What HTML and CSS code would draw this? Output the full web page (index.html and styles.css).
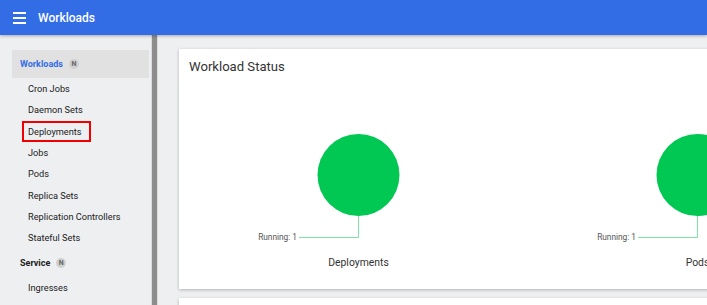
FILE: index.html
```html
<!DOCTYPE html>
<html lang="en">
<head>
    <meta charset="UTF-8">
    <meta name="viewport" content="width=device-width, initial-scale=1.0">
    <title>Workloads</title>
    <link rel="stylesheet" href="styles.css">
</head>
<body>
    <div class="topbar">
        <div class="burger"><span></span><span></span><span></span></div>
        <div class="title">Workloads</div>
    </div>
    <div class="layout">
        <div class="sidebar">
            <div class="section active">Workloads <span class="badge">N</span></div>
            <div class="item">Cron Jobs</div>
            <div class="item">Daemon Sets</div>
            <div class="item"><span class="marked">Deployments</span></div>
            <div class="item">Jobs</div>
            <div class="item">Pods</div>
            <div class="item">Replica Sets</div>
            <div class="item">Replication Controllers</div>
            <div class="item">Stateful Sets</div>
            <div class="section">Service <span class="badge">N</span></div>
            <div class="item">Ingresses</div>
            <div class="item">Services</div>
        </div>
        <div class="scroller"></div>
        <div class="main">
            <div class="card">
                <div class="card-title">Workload Status</div>
                <div class="charts">
                    <div class="chart">
                        <svg width="339" height="170" viewBox="0 0 339 170">
                            <circle cx="169.5" cy="98" r="41" fill="#00c853"/>
                            <polyline points="169.5,139 169.5,160.5 110,160.5" fill="none" stroke="#7ee3a4" stroke-width="1"/>
                            <text x="108" y="163" text-anchor="end" class="running">Running: 1</text>
                        </svg>
                        <div class="chart-label">Deployments</div>
                    </div>
                    <div class="chart">
                        <svg width="339" height="170" viewBox="0 0 339 170">
                            <circle cx="169.5" cy="98" r="41" fill="#00c853"/>
                            <polyline points="169.5,139 169.5,160.5 110,160.5" fill="none" stroke="#7ee3a4" stroke-width="1"/>
                            <text x="108" y="163" text-anchor="end" class="running">Running: 1</text>
                        </svg>
                        <div class="chart-label">Pods</div>
                    </div>
                </div>
            </div>
            <div class="card next"></div>
        </div>
    </div>
</body>
</html>
```

FILE: styles.css
```css
*{
    margin:0;
    padding:0;
    box-sizing:border-box;
}

body{
    width:707px;
    height:305px;
    overflow:hidden;
    background-color:#eeeff1;
    font-family:Roboto, "Liberation Sans", sans-serif;
    color:#212121;
}

.topbar{
    height:35px;
    background-color:#326de6;
    display:flex;
    align-items:center;
    padding-left:13px;
    box-shadow:0 1px 3px rgba(0,0,0,.3);
    position:relative;
    z-index:2;
}
.burger{
    width:13px;
    display:flex;
    flex-direction:column;
    gap:3px;
    margin-right:12px;
}
.burger span{
    display:block;
    height:2px;
    background-color:#fff;
}
.title{
    color:#fff;
    font-size:12px;
    font-weight:500;
}

.layout{
    display:flex;
    height:270px;
}

.sidebar{
    width:151px;
    padding:15px 2px 0 12px;
    background-color:#eeeff1;
}
.section{
    height:28.6px;
    display:flex;
    align-items:center;
    padding-left:8px;
    font-size:9px;
    font-weight:700;
    color:#212121;
}
.section.active{
    height:28px;
    background-color:#e1e1e1;
    color:#326de6;
}
.badge{
    display:inline-flex;
    align-items:center;
    justify-content:center;
    width:10px;
    height:10px;
    border-radius:50%;
    background-color:#d0d0d0;
    color:#666;
    font-size:7px;
    font-weight:700;
    margin-left:6px;
}
.item{
    height:21.3px;
    display:flex;
    align-items:center;
    padding-left:16px;
    font-size:9.2px;
    color:#212121;
}
.marked{
    border:2px solid #f00000;
    padding:3px 7px 3px 4px;
    margin-left:-6px;
}

.scroller{
    width:7px;
    border-left:1px solid #dcdcdc;
    border-right:1px solid #dcdcdc;
    background-color:#8d8d8d;
}

.main{
    flex:1;
    padding:14px 0 0 21px;
    overflow:hidden;
}
.card{
    width:900px;
    background-color:#fff;
    box-shadow:0 1px 3px rgba(0,0,0,.25);
    padding:8px 10px 18px;
}
.card-title{
    font-size:13.1px;
    line-height:20px;
    color:#333;
}
.charts{
    display:flex;
}
.chart{
    width:339px;
    flex-shrink:0;
    display:flex;
    flex-direction:column;
    align-items:center;
}
.running{
    font-size:8.3px;
    fill:#555;
    font-family:Roboto, "Liberation Sans", sans-serif;
}
.chart-label{
    margin-top:8px;
    line-height:16px;
    font-size:10.4px;
    color:#333;
}
.card.next{
    margin-top:9px;
    height:40px;
}
```
